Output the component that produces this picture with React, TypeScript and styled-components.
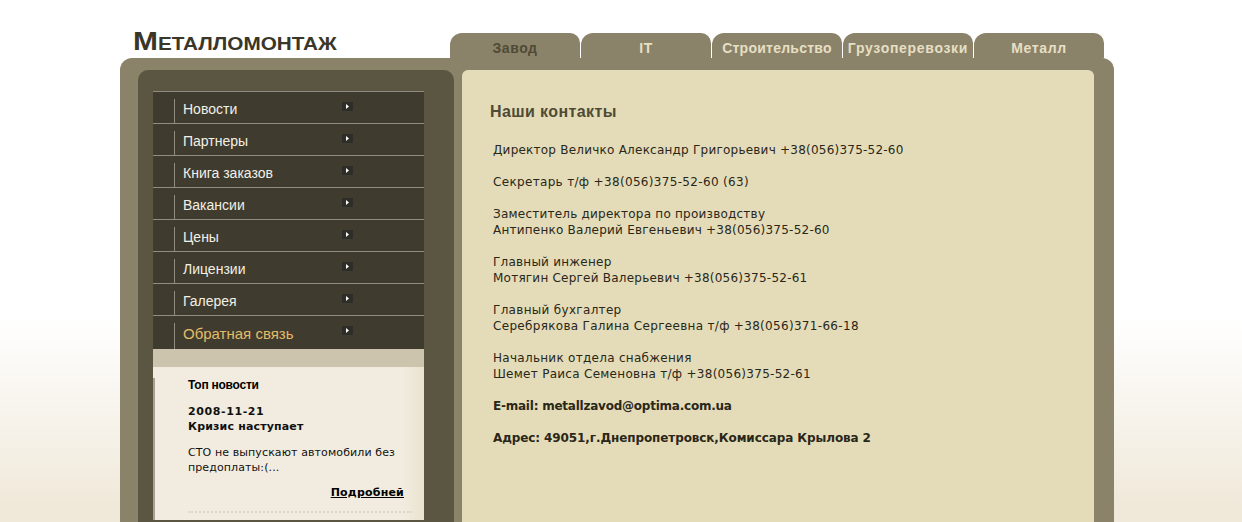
import React from "react"
import styled, { createGlobalStyle } from "styled-components"

const menuItems = ["Новости", "Партнеры", "Книга заказов", "Вакансии", "Цены", "Лицензии", "Галерея"]
const tabs = [
  { label: "Завод", spacing: 0.6 },
  { label: "IT", spacing: 0.5 },
  { label: "Строительство", spacing: 0.25 },
  { label: "Грузоперевозки", spacing: 0.7 },
  { label: "Металл", spacing: 0.6 },
]

const GlobalStyle = createGlobalStyle`
  html, body {
    margin: 0;
    padding: 0;
    height: 522px;
    overflow: hidden;
    background: #fff;
  }
  body {
    font-family: "DejaVu Sans", Verdana, sans-serif;
  }
`

const Page = styled.div`
  height: 522px;
  overflow: hidden;
  background: linear-gradient(to bottom, #fff 0, #fff 318px, #f0e9da 505px, #f0e9da 522px);
`

const Wrapper = styled.div`
  width: 994px;
  margin-left: 120px;
`

const Header = styled.header`
  height: 58px;
  display: flex;
  align-items: flex-end;
  background: #fff;
`

const LogoBox = styled.div`
  margin: 0 0 1px 13px;
  width: 317px;
  height: 32px;
`

const Logo = styled.h1`
  margin: 0;
  display: inline-block;
  font: bold 26px/32px "Liberation Sans", Arial, sans-serif;
  color: #3a3628;
  font-variant: small-caps;
  white-space: nowrap;
  transform: scaleX(1.15);
  transform-origin: left center;
`

const TabRow = styled.nav`
  display: flex;
`

const Tab = styled.a<{ $active?: boolean; $spacing: number }>`
  width: 130px;
  height: 25px;
  margin-right: 1px;
  background: #8b8369;
  border-radius: 12px 10px 0 0;
  text-align: center;
  font: bold 14px/30px "Liberation Sans", Arial, sans-serif;
  letter-spacing: ${(p) => p.$spacing}px;
  white-space: nowrap;
  color: ${(p) => (p.$active ? "#4f4a36" : "#e6dfc4")};
  &:last-child {
    margin-right: 0;
  }
`

const Frame = styled.div`
  height: 464px;
  background: #8b8369;
  border-radius: 12px 12px 0 0;
  display: flex;
  padding: 12px 20px 0 18px;
  box-sizing: border-box;
  gap: 8px;
`

const Sidebar = styled.aside`
  width: 316px;
  height: 452px;
  background: #5a5642;
  border-radius: 10px 10px 0 0;
  padding: 21px 30px 0 15px;
  box-sizing: border-box;
`

const Menu = styled.ul`
  list-style: none;
  margin: 0;
  padding: 0;
  background: #3f3b2e;
`

const MenuItem = styled.li<{ $accent?: boolean }>`
  height: ${(p) => (p.$accent ? "34px" : "32px")};
  box-sizing: border-box;
  border-top: 1px solid #8f8c80;
  padding: 7px 0 0 21px;
  display: flex;
  align-items: flex-start;
  font: ${(p) => (p.$accent ? "15px/22px" : "14px/20px")} "Liberation Sans", Arial, sans-serif;
  color: ${(p) => (p.$accent ? "#e3bc6a" : "#f2f0e6")};
`

const MenuLabel = styled.span`
  width: 159px;
  height: 100%;
  padding-left: 8px;
  border-left: 1px solid #8f8c80;
  white-space: nowrap;
`

const Arrow = styled.svg`
  width: 11px;
  height: 9px;
  margin-top: 3px;
`

const Gap = styled.div`
  height: 18px;
  background: #cdc4ad;
`

const NewsCard = styled.section`
  position: relative;
  height: 154px;
  box-sizing: border-box;
  background: linear-gradient(to right, #f1ecdf 0, #f1ecdf 92%, #e9e3cf 100%);
  border-bottom: 1px solid #5a5642;
  padding: 10px 12px 0 35px;
  font-size: 11px;
  line-height: 15px;
  color: #111;
  &::before {
    content: "";
    position: absolute;
    left: 0;
    top: 11px;
    bottom: 0;
    width: 2px;
    background: #a8a391;
  }
`

const NewsTitle = styled.h3`
  margin: 0 0 11px;
  font: bold 12px/16px "Liberation Sans", Arial, sans-serif;
  letter-spacing: -0.25px;
  color: #000;
`

const NewsDate = styled.div`
  font-weight: bold;
  letter-spacing: 0.6px;
  margin-top: 6px;
`

const NewsHeadline = styled.div`
  font-weight: bold;
  letter-spacing: 0.16px;
`

const NewsText = styled.p`
  margin: 11px 0 0;
  letter-spacing: 0.1px;
`

const More = styled.a`
  display: block;
  margin: 10px 8px 0 0;
  text-align: right;
  font-weight: bold;
  letter-spacing: 0.2px;
  color: #000;
  text-decoration: underline;
`

const Dotted = styled.div`
  margin: 11px 0 0;
  border-top: 2px dotted #dcd7c6;
`

const Content = styled.main`
  width: 632px;
  height: 452px;
  background: #e4dcb8;
  border-radius: 6px 6px 0 0;
  padding: 33px 28px 0 28px;
  box-sizing: border-box;
  color: #2a2718;
`

const Heading = styled.h2`
  margin: 0 0 21px;
  font: bold 16px/18px "Liberation Sans", Arial, sans-serif;
  letter-spacing: 0.4px;
  color: #4f4a36;
`

const Block = styled.p<{ $spacing?: number; $bold?: boolean }>`
  margin: 0 0 16px 3px;
  font-size: 12px;
  line-height: 16px;
  font-weight: ${(p) => (p.$bold ? "bold" : "normal")};
  letter-spacing: ${(p) => p.$spacing ?? 0.23}px;
`

const MenuArrow = () => (
  <Arrow viewBox="0 0 11 9">
    <rect width="11" height="9" fill="#2e2d28" />
    <path d="M4 2l3 2.5-3 2.5z" fill="#fff" />
  </Arrow>
)

export default function App() {
  return (
    <Page>
      <GlobalStyle />
      <Wrapper>
        <Header>
          <LogoBox>
            <Logo>Металломонтаж</Logo>
          </LogoBox>
          <TabRow>
            {tabs.map((t, i) => (
              <Tab key={t.label} $active={i === 0} $spacing={t.spacing}>
                {t.label}
              </Tab>
            ))}
          </TabRow>
        </Header>
        <Frame>
          <Sidebar>
            <Menu>
              {menuItems.map((m) => (
                <MenuItem key={m}>
                  <MenuLabel>{m}</MenuLabel>
                  <MenuArrow />
                </MenuItem>
              ))}
              <MenuItem $accent>
                <MenuLabel>Обратная связь</MenuLabel>
                <MenuArrow />
              </MenuItem>
            </Menu>
            <Gap />
            <NewsCard>
              <NewsTitle>Топ новости</NewsTitle>
              <NewsDate>2008-11-21</NewsDate>
              <NewsHeadline>Кризис наступает</NewsHeadline>
              <NewsText>
                СТО не выпускают автомобили без предоплаты:(...
              </NewsText>
              <More>Подробней</More>
              <Dotted />
            </NewsCard>
          </Sidebar>
          <Content>
            <Heading>Наши контакты</Heading>
            <Block>Директор Величко Александр Григорьевич +38(056)375-52-60</Block>
            <Block $spacing={0.33}>Секретарь т/ф +38(056)375-52-60 (63)</Block>
            <Block>
              Заместитель директора по производству
              <br />
              Антипенко Валерий Евгеньевич +38(056)375-52-60
            </Block>
            <Block>
              Главный инженер
              <br />
              Мотягин Сергей Валерьевич +38(056)375-52-61
            </Block>
            <Block $spacing={0.31}>
              Главный бухгалтер
              <br />
              Серебрякова Галина Сергеевна т/ф +38(056)371-66-18
            </Block>
            <Block $spacing={0.28}>
              Начальник отдела снабжения
              <br />
              Шемет Раиса Семеновна т/ф +38(056)375-52-61
            </Block>
            <Block $bold $spacing={-0.23}>E-mail: metallzavod@optima.com.ua</Block>
            <Block $bold $spacing={-0.1}>Адрес: 49051,г.Днепропетровск,Комиссара Крылова 2</Block>
          </Content>
        </Frame>
      </Wrapper>
    </Page>
  )
}
